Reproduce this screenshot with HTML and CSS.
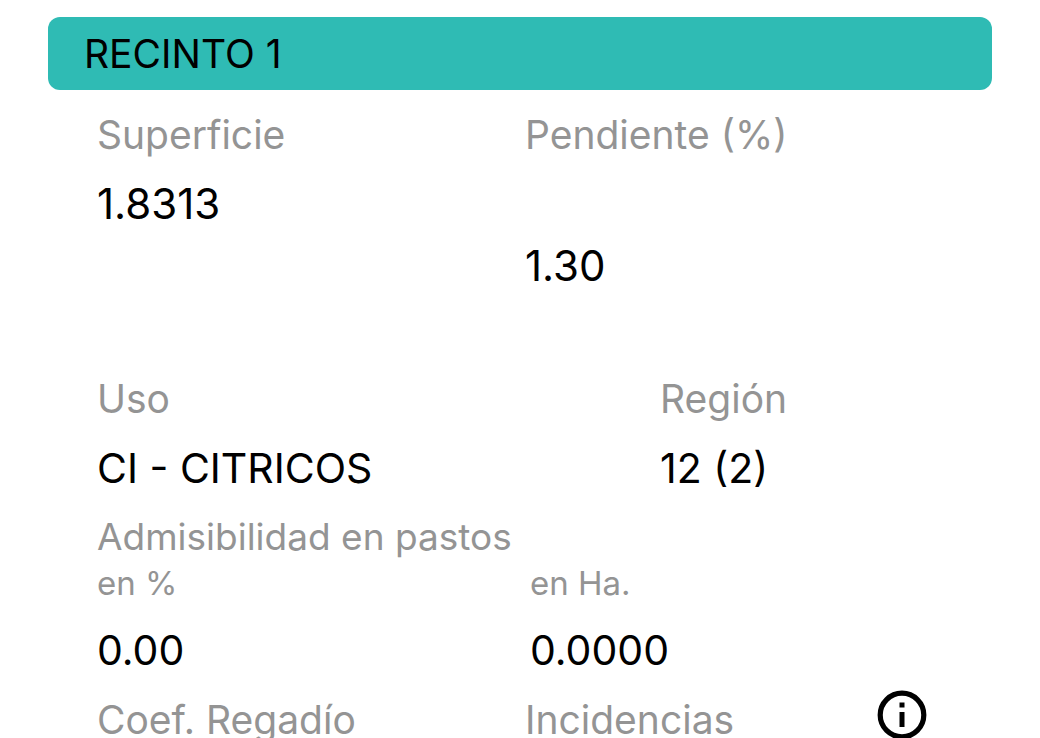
FILE: index.html
```html
<!DOCTYPE html>
<html lang="es">
<head>
  <meta charset="UTF-8" />
  <meta name="viewport" content="width=device-width, initial-scale=1.0"/>
  <title>Recinto 1</title>
  <link rel="stylesheet" href="styles.css">
</head>
<body>
  <main class="recinto">
    <h1 class="recinto-title">RECINTO 1</h1>

    <dl class="row measures">
      <div class="field">
        <dt>Superficie</dt>
        <dd>1.8313</dd>
      </div>
      <div class="field slope">
        <dt>Pendiente (%)</dt>
        <dd>1.30</dd>
      </div>
    </dl>

    <dl class="row usage">
      <div class="field">
        <dt>Uso</dt>
        <dd>CI - CITRICOS</dd>
      </div>
      <div class="field">
        <dt>Región</dt>
        <dd>12 (2)</dd>
      </div>
    </dl>

    <h2 class="label pasture-title">Admisibilidad en pastos</h2>
    <dl class="row pasture">
      <div class="field">
        <dt>en %</dt>
        <dd>0.00</dd>
      </div>
      <div class="field">
        <dt>en Ha.</dt>
        <dd>0.0000</dd>
      </div>
    </dl>

    <div class="row last">
      <h2 class="label">Coef. Regadío</h2>
      <div class="incidents">
        <h2 class="label">Incidencias</h2>
        <button class="info-btn" type="button" aria-label="Información">
          <svg viewBox="0 0 50 50" width="50" height="50" aria-hidden="true">
            <circle cx="25" cy="25" r="21.8" fill="none" stroke="#000" stroke-width="5.2"/>
            <rect x="22.5" y="12.5" width="5" height="5" fill="#000"/>
            <rect x="22.5" y="22" width="5" height="15" fill="#000"/>
          </svg>
        </button>
      </div>
    </div>
  </main>
</body>
</html>
```

FILE: styles.css
```css
* {
  box-sizing: border-box;
}

body {
  margin: 0;
  background: #fff;
  color: #000;
  font-family: Inter, "Liberation Sans", sans-serif;
  font-size: 42px;
  overflow: hidden;
}

h1,
h2,
dl,
dd {
  margin: 0;
  font-weight: 400;
}

.recinto {
  padding: 17px 48px 0;
}

.recinto-title {
  padding: 0 36px;
  border-radius: 12px;
  background: #2fbbb4;
  font-size: 39px;
  line-height: 73px;
}

.row {
  display: grid;
  grid-template-columns: 428px 1fr;
  padding-left: 49px;
}

.label,
dt {
  color: #949494;
  font-size: 39px;
  line-height: 48px;
}

dd {
  line-height: 48px;
  margin-top: 21px;
}

.measures {
  padding-top: 21px;
}

.slope dd {
  margin-top: 83px;
}

.usage {
  grid-template-columns: 563px 1fr;
  padding-top: 85px;
}

.usage dd,
.pasture dd {
  font-size: 41px;
}

.pasture-title {
  padding: 21px 0 0 49px;
  font-size: 37px;
}

.pasture {
  grid-template-columns: 433px 1fr;
}

.pasture dt {
  font-size: 33px;
  line-height: 44px;
}

.last {
  padding-top: 22px;
}

.incidents {
  display: flex;
  justify-content: space-between;
  padding-right: 65px;
}

.info-btn {
  width: 50px;
  height: 50px;
  margin-top: -6px;
  padding: 0;
  border: none;
  background: none;
  cursor: pointer;
}

.info-btn svg {
  display: block;
}
```
